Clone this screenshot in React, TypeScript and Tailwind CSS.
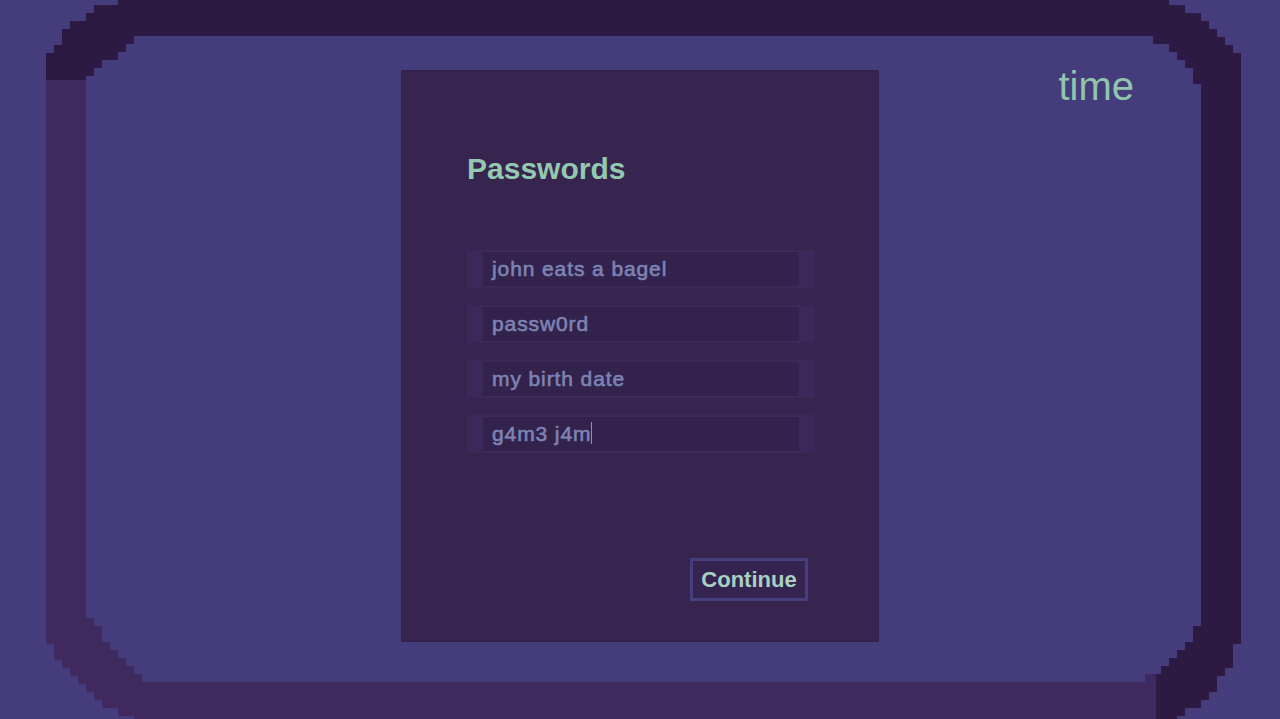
type Corner = { rx: number; ry: number; e: number };
type Pt = [number, number];

const CELL = 8;

// Rounded rectangle with pixel-stair corners. Each corner is a superellipse
// (exponent e) snapped to an 8px grid measured from the rectangle's edges.
function steppedRect(
  x0: number,
  y0: number,
  x1: number,
  y1: number,
  tl: Corner,
  tr: Corner,
  br: Corner,
  bl: Corner,
): string {
  const pts: Pt[] = [];
  const push = (p: Pt) => {
    const last = pts[pts.length - 1];
    if (!last || last[0] !== p[0] || last[1] !== p[1]) pts.push(p);
  };
  const arc = (cx: number, cy: number, xEdge: number, yEdge: number, c: Corner, a0: number, a1: number) => {
    const k = 2 / c.e;
    for (let i = 0; i <= 60; i++) {
      const a = a0 + ((a1 - a0) * i) / 60;
      const co = Math.cos(a);
      const si = Math.sin(a);
      const x = cx + Math.sign(co) * Math.pow(Math.abs(co), k) * c.rx;
      const y = cy + Math.sign(si) * Math.pow(Math.abs(si), k) * c.ry;
      push([
        xEdge + Math.round((x - xEdge) / CELL) * CELL,
        yEdge + Math.round((y - yEdge) / CELL) * CELL,
      ]);
    }
  };
  const P = Math.PI;
  arc(x0 + tl.rx, y0 + tl.ry, x0, y0, tl, P, 1.5 * P);
  arc(x1 - tr.rx, y0 + tr.ry, x1, y0, tr, 1.5 * P, 2 * P);
  arc(x1 - br.rx, y1 - br.ry, x1, y1, br, 0, 0.5 * P);
  arc(x0 + bl.rx, y1 - bl.ry, x0, y1, bl, 0.5 * P, P);

  let d = `M${pts[0][0]},${pts[0][1]}`;
  for (let i = 1; i < pts.length; i++) {
    const [, ya] = pts[i - 1];
    const [xb, yb] = pts[i];
    d += ` L${xb},${ya} L${xb},${yb}`;
  }
  return d + ' Z';
}

const outer = steppedRect(
  46, -3, 1241, 724,
  { rx: 96, ry: 76, e: 1.8 },
  { rx: 100, ry: 76, e: 1.7 },
  { rx: 84, ry: 100, e: 1.7 },
  { rx: 104, ry: 100, e: 1.5 },
);
const inner = steppedRect(
  86, 36, 1201, 682,
  { rx: 57, ry: 48, e: 1.15 },
  { rx: 58, ry: 64, e: 1.5 },
  { rx: 64, ry: 68, e: 1.4 },
  { rx: 64, ry: 72, e: 1.15 },
);
const ring = `${outer} ${inner}`;

function Frame() {
  return (
    <svg
      className="absolute inset-0 h-full w-full"
      viewBox="0 0 1280 719"
      preserveAspectRatio="none"
      shapeRendering="crispEdges"
    >
      <defs>
        <clipPath id="lit-side">
          <rect x="0" y="80" width="1156" height="660" />
        </clipPath>
      </defs>
      <path d={ring} fill="#2d1a42" fillRule="evenodd" />
      <path d={ring} fill="#3e2a5e" fillRule="evenodd" clipPath="url(#lit-side)" />
    </svg>
  );
}

const passwords = ['john eats a bagel', 'passw0rd', 'my birth date', 'g4m3 j4m'];

function Field({ value, focused }: { value: string; focused?: boolean }) {
  return (
    <div className="flex h-[38px] w-[348px] bg-[#3b2959] px-4 py-px">
      <div className="flex flex-1 items-center border-y border-[#3d2b5a] bg-[#33224c] pb-[2px] pl-[9px] text-[21px] leading-none tracking-[0.9px] text-[#7c84b4] [-webkit-text-stroke:0.6px_#7c84b4]">
        <span>{value}</span>
        {focused && <span className="h-[22px] w-px bg-[#8a90bd]" />}
      </div>
    </div>
  );
}

export default function App() {
  return (
    <div className="relative h-[719px] w-full overflow-hidden bg-[#453d7b] font-['Liberation_Sans',Arial,sans-serif]">
      <Frame />

      <div className="absolute right-[146px] top-[66px] text-[40px] leading-none text-[#90c6ae]">time</div>

      <div className="relative flex justify-center pt-[70px]">
        <div className="flex h-[572px] w-[478px] flex-col rounded-[2px] border border-[#2f1e46] bg-[#37244f] pb-[40px] pl-[65px] pr-[64px] pt-[83px]">
          <h1 className="text-[30px] font-bold leading-none text-[#93c9b0]">Passwords</h1>

          <div className="mt-[66px] flex flex-col gap-[17px]">
            {passwords.map((p, i) => (
              <Field key={i} value={p} focused={i === passwords.length - 1} />
            ))}
          </div>

          <button className="mr-[6px] mt-auto flex h-[43px] w-[118px] items-center justify-center self-end border-[3px] border-[#473e80] bg-[#35244f] text-[22px] font-bold leading-none text-[#a9d0c3]">
            Continue
          </button>
        </div>
      </div>
    </div>
  );
}
